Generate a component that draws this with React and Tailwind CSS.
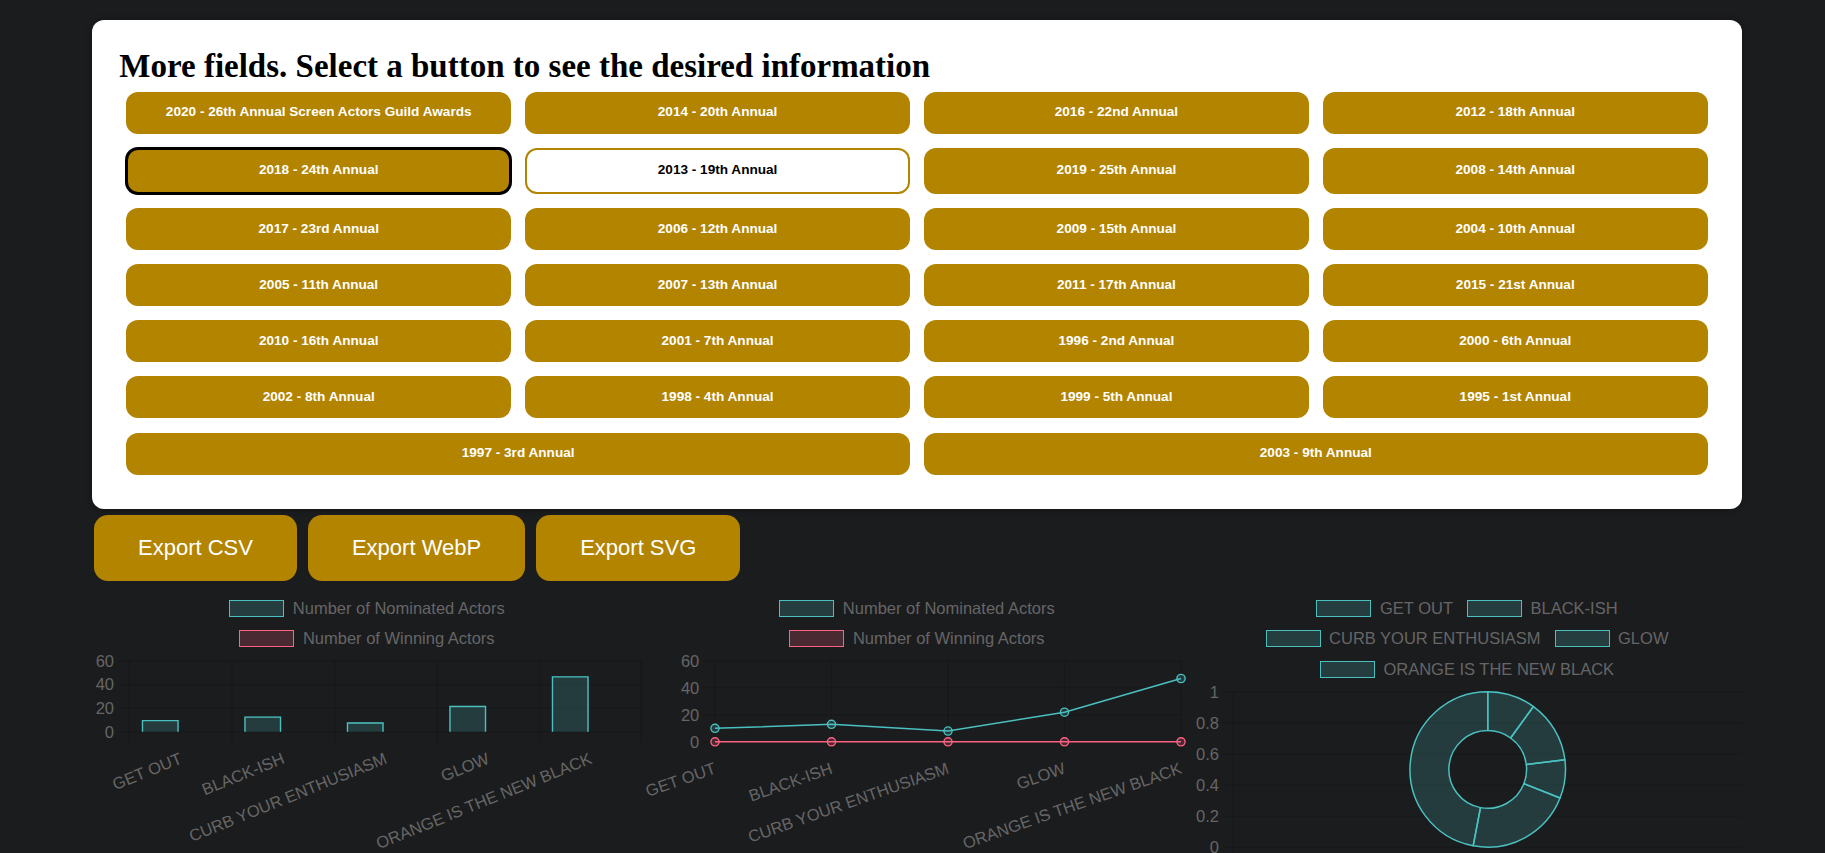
import React from "react";

const TEAL = "#4bc0c0";
const TEAL_FILL = "rgba(75,192,192,0.2)";
const RED = "#ff6384";
const RED_FILL = "rgba(255,99,132,0.2)";
const GRID = "rgba(0,0,0,0.14)";
const LABEL = "#666666";
const FONT = "'Liberation Sans', Arial, sans-serif";

const cats = ["GET OUT", "BLACK-ISH", "CURB YOUR ENTHUSIASM", "GLOW", "ORANGE IS THE NEW BLACK"];
const vals = [10, 13, 8, 22, 47];

const rows = [
  ["2020 - 26th Annual Screen Actors Guild Awards", "2014 - 20th Annual", "2016 - 22nd Annual", "2012 - 18th Annual"],
  ["2018 - 24th Annual", "2013 - 19th Annual", "2019 - 25th Annual", "2008 - 14th Annual"],
  ["2017 - 23rd Annual", "2006 - 12th Annual", "2009 - 15th Annual", "2004 - 10th Annual"],
  ["2005 - 11th Annual", "2007 - 13th Annual", "2011 - 17th Annual", "2015 - 21st Annual"],
  ["2010 - 16th Annual", "2001 - 7th Annual", "1996 - 2nd Annual", "2000 - 6th Annual"],
  ["2002 - 8th Annual", "1998 - 4th Annual", "1999 - 5th Annual", "1995 - 1st Annual"],
];

function FieldButton({ label }) {
  if (label === "2018 - 24th Annual") {
    return (
      <button className="min-h-[46px] rounded-[12px] border-2 border-black ring-1 ring-black bg-[#b38400] text-[13.6px] font-bold text-white">
        {label}
      </button>
    );
  }
  if (label === "2013 - 19th Annual") {
    return (
      <button className="min-h-[46px] rounded-[12px] border-2 border-[#b38400] bg-white text-[13.6px] font-bold text-black">
        {label}
      </button>
    );
  }
  return (
    <button className="min-h-[42px] rounded-[12px] bg-[#b38400] text-[13.6px] font-bold text-white">
      {label}
    </button>
  );
}

function LegendItem({ label, red }) {
  return (
    <div className="flex items-center gap-[8.5px]">
      <span
        className={
          red
            ? "block h-[17px] w-[55px] border-[1.5px] border-[#ff6384] bg-[#492a32]"
            : "block h-[17px] w-[55px] border-[1.5px] border-[#4bc0c0] bg-[#253d3e]"
        }
      />
      <span className="text-[16.5px] leading-[17px] text-[#666666]">{label}</span>
    </div>
  );
}

function ActorsLegend() {
  return (
    <div className="flex h-[61.5px] flex-col items-center gap-[13.5px] pt-[14px]">
      <LegendItem label="Number of Nominated Actors" />
      <LegendItem label="Number of Winning Actors" red />
    </div>
  );
}

function BarChart() {
  const x0 = 37.5,
    step = 102.5,
    zero = 84.8,
    unit = 71 / 60;
  const ticks = [0, 20, 40, 60];
  return (
    <svg width="550" height="210" className="block">
      {ticks.map((t) => (
        <line key={"h" + t} x1={27} x2={550} y1={zero - t * unit} y2={zero - t * unit} stroke={GRID} strokeWidth="1.375" />
      ))}
      {[0, 1, 2, 3, 4, 5].map((k) => (
        <line
          key={"v" + k}
          x1={Math.min(x0 + step * k, 549.3)}
          x2={Math.min(x0 + step * k, 549.3)}
          y1={zero - 60 * unit}
          y2={zero + 11}
          stroke={GRID}
          strokeWidth="1.375"
        />
      ))}
      {ticks.map((t) => (
        <text key={"t" + t} x={22} y={zero - t * unit} textAnchor="end" dominantBaseline="central" fill={LABEL} fontSize="16.5" fontFamily={FONT}>
          {t}
        </text>
      ))}
      {vals.map((v, i) => {
        const c = x0 + step * (i + 0.5);
        const bw = 36.9;
        const bx = c - 20.5 - bw / 2;
        const h = v * unit;
        const by = zero - h;
        const b = 0.69;
        return (
          <g key={"b" + i}>
            <rect x={bx} y={by} width={bw} height={h} fill={TEAL_FILL} />
            <path d={`M${bx + b} ${zero} V${by + b} H${bx + bw - b} V${zero}`} fill="none" stroke={TEAL} strokeWidth="1.375" />
          </g>
        );
      })}
      {cats.map((c, i) => {
        const cx = x0 + step * (i + 0.5);
        const py = zero + 25.5;
        return (
          <text
            key={"l" + i}
            x={cx}
            y={py}
            textAnchor="end"
            dominantBaseline="central"
            transform={`rotate(-22 ${cx} ${py})`}
            fill={LABEL}
            fontSize="16.5"
            fontFamily={FONT}
          >
            {c}
          </text>
        );
      })}
    </svg>
  );
}

function LineChart() {
  const x0 = 73,
    step = 116.5,
    zero = 94.8,
    unit = 80.8 / 60;
  const ticks = [0, 20, 40, 60];
  const pts = vals.map((v, i) => [x0 + step * i, zero - v * unit]);
  const zeroPts = vals.map((v, i) => [x0 + step * i, zero]);
  return (
    <svg width="550" height="210" className="block">
      {ticks.map((t) => (
        <line key={"h" + t} x1={61} x2={x0 + step * 4} y1={zero - t * unit} y2={zero - t * unit} stroke={GRID} strokeWidth="1.375" />
      ))}
      {[0, 1, 2, 3, 4].map((k) => (
        <line key={"v" + k} x1={x0 + step * k} x2={x0 + step * k} y1={zero - 60 * unit} y2={zero + 11} stroke={GRID} strokeWidth="1.375" />
      ))}
      {ticks.map((t) => (
        <text key={"t" + t} x={57.3} y={zero - t * unit} textAnchor="end" dominantBaseline="central" fill={LABEL} fontSize="16.5" fontFamily={FONT}>
          {t}
        </text>
      ))}
      <polyline points={zeroPts.map((p) => p.join(",")).join(" ")} fill="none" stroke={RED} strokeWidth="1.5" />
      {zeroPts.map((p, i) => (
        <circle key={"r" + i} cx={p[0]} cy={p[1]} r="4.1" fill={RED_FILL} stroke={RED} strokeWidth="1.375" />
      ))}
      <polyline points={pts.map((p) => p.join(",")).join(" ")} fill="none" stroke={TEAL} strokeWidth="1.5" />
      {pts.map((p, i) => (
        <circle key={"p" + i} cx={p[0]} cy={p[1]} r="4.1" fill={TEAL_FILL} stroke={TEAL} strokeWidth="1.375" />
      ))}
      {cats.map((c, i) => {
        const cx = x0 + step * i;
        const py = zero + 25.5;
        return (
          <text
            key={"l" + i}
            x={cx}
            y={py}
            textAnchor="end"
            dominantBaseline="central"
            transform={`rotate(-19.3 ${cx} ${py})`}
            fill={LABEL}
            fontSize="16.5"
            fontFamily={FONT}
          >
            {c}
          </text>
        );
      })}
    </svg>
  );
}

function arcPath(cx, cy, R, r, a0, a1) {
  const p = (rad, a) => [cx + rad * Math.sin(a), cy - rad * Math.cos(a)];
  const [x0, y0] = p(R, a0);
  const [x1, y1] = p(R, a1);
  const [x2, y2] = p(r, a1);
  const [x3, y3] = p(r, a0);
  const large = a1 - a0 > Math.PI ? 1 : 0;
  return `M${x0} ${y0} A${R} ${R} 0 ${large} 1 ${x1} ${y1} L${x2} ${y2} A${r} ${r} 0 ${large} 0 ${x3} ${y3} Z`;
}

function DoughnutChart() {
  const top = 13.7,
    pitch = 31.1;
  const labels = ["1", "0.8", "0.6", "0.4", "0.2", "0"];
  const left = 41.5;
  const bottom = top + pitch * 5;
  const cx = (left + 550) / 2,
    cy = (top + bottom) / 2,
    R = (bottom - top) / 2,
    r = R / 2;
  const total = vals.reduce((a, b) => a + b, 0);
  let acc = 0;
  const arcs = vals.map((v) => {
    const a0 = (acc / total) * Math.PI * 2;
    acc += v;
    const a1 = (acc / total) * Math.PI * 2;
    return [a0, a1];
  });
  return (
    <svg width="550" height="180" className="block">
      {labels.map((l, i) => (
        <line key={"h" + i} x1={31} x2={550} y1={top + pitch * i} y2={top + pitch * i} stroke={GRID} strokeWidth="1.375" />
      ))}
      <line x1={left} x2={left} y1={top} y2={bottom + 11} stroke={GRID} strokeWidth="1.375" />
      {labels.map((l, i) => (
        <text key={"t" + i} x={27} y={top + pitch * i} textAnchor="end" dominantBaseline="central" fill={LABEL} fontSize="16.5" fontFamily={FONT}>
          {l}
        </text>
      ))}
      {arcs.map(([a0, a1], i) => (
        <path key={"a" + i} d={arcPath(cx, cy, R, r, a0, a1)} fill={TEAL_FILL} stroke={TEAL} strokeWidth="1.5" strokeLinejoin="round" />
      ))}
    </svg>
  );
}

export default function App() {
  return (
    <div className="h-[853px] w-[1825px] overflow-hidden bg-[#1b1c1e] pt-[20px] font-['Liberation_Sans',Arial,sans-serif]">
      <div className="ml-[92px] w-[1650px]">
        <div className="rounded-[12px] bg-white px-[27.3px] pt-[26.5px] pb-[27px] shadow-[0_0_6px_rgba(0,0,0,0.35)]">
          <h1 className="font-['Liberation_Serif','Times_New_Roman',serif] text-[33px] leading-[38px] font-bold text-black">
            More fields. Select a button to see the desired information
          </h1>
          <div className="grid grid-cols-4 gap-x-[14px] gap-y-[14.2px] p-[7px]">
            {rows.flat().map((l) => (
              <FieldButton key={l} label={l} />
            ))}
            <button className="col-span-2 min-h-[42px] rounded-[12px] bg-[#b38400] text-[13.6px] font-bold text-white">
              1997 - 3rd Annual
            </button>
            <button className="col-span-2 min-h-[42px] rounded-[12px] bg-[#b38400] text-[13.6px] font-bold text-white">
              2003 - 9th Annual
            </button>
          </div>
        </div>

        <div className="mt-[6px] ml-[2px] flex gap-[11px]">
          <button className="h-[66px] rounded-[14px] bg-[#b38400] px-[44px] text-[22px] text-white">Export CSV</button>
          <button className="h-[66px] rounded-[14px] bg-[#b38400] px-[44px] text-[22px] text-white">Export WebP</button>
          <button className="h-[66px] rounded-[14px] bg-[#b38400] px-[44px] text-[22px] text-white">Export SVG</button>
        </div>

        <div className="mt-[5px] flex">
          <div className="w-[550px] shrink-0">
            <ActorsLegend />
            <BarChart />
          </div>
          <div className="w-[550px] shrink-0">
            <ActorsLegend />
            <LineChart />
          </div>
          <div className="w-[550px] shrink-0">
            <div className="flex h-[92px] flex-col items-center gap-[13.5px] pt-[14px]">
              <div className="flex gap-[14px]">
                <LegendItem label="GET OUT" />
                <LegendItem label="BLACK-ISH" />
              </div>
              <div className="flex gap-[14px]">
                <LegendItem label="CURB YOUR ENTHUSIASM" />
                <LegendItem label="GLOW" />
              </div>
              <div className="flex gap-[14px]">
                <LegendItem label="ORANGE IS THE NEW BLACK" />
              </div>
            </div>
            <DoughnutChart />
          </div>
        </div>
      </div>
    </div>
  );
}
